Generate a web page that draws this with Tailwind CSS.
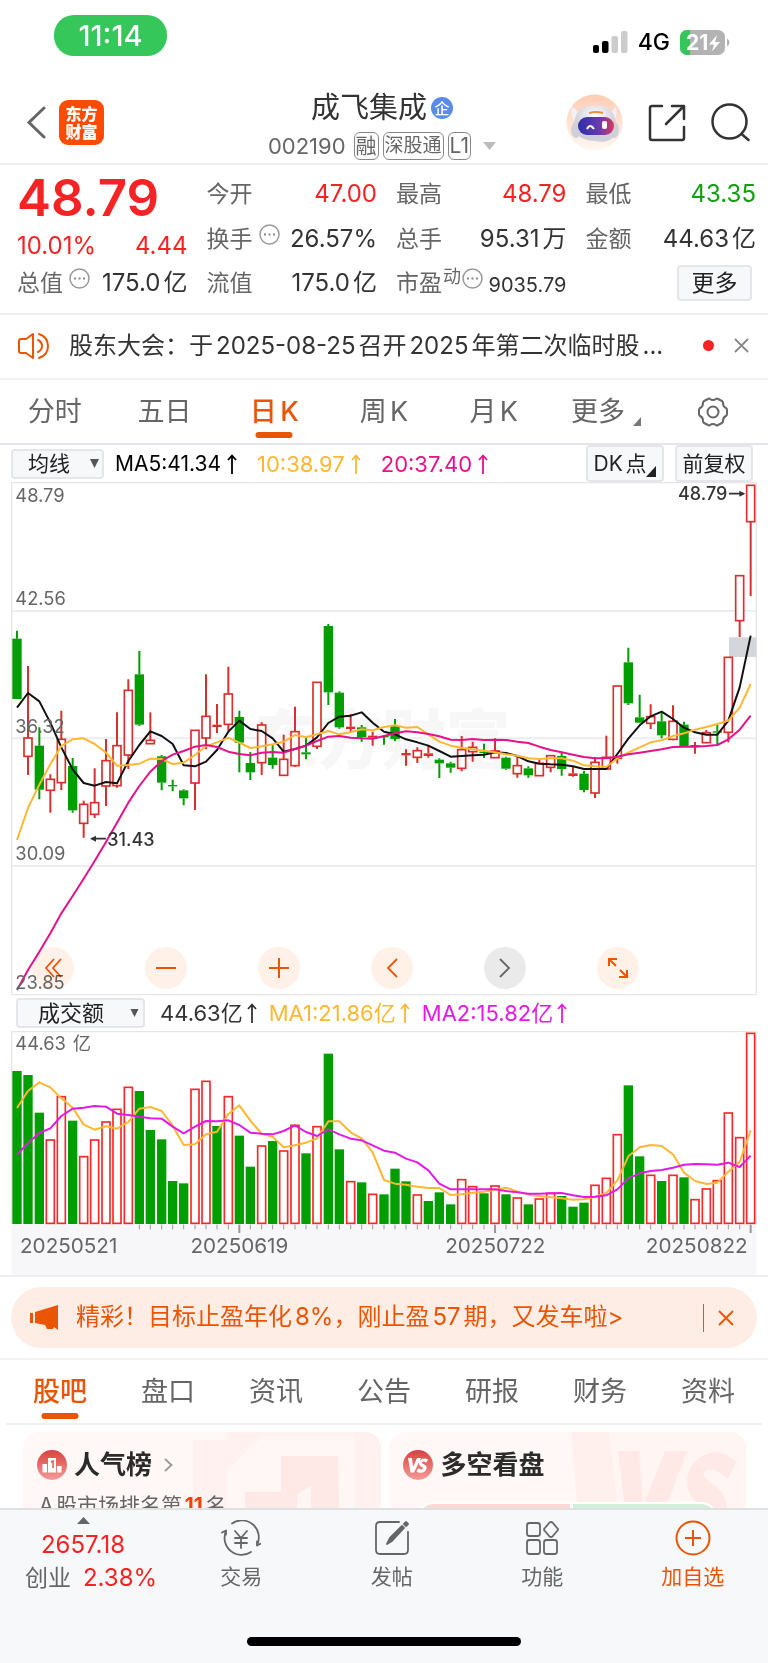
<!DOCTYPE html>
<html lang="zh-CN">
<head>
<meta charset="utf-8">
<meta name="viewport" content="width=device-width, initial-scale=1">
<title>成飞集成 002190</title>
<script src="https://cdn.jsdelivr.net/npm/@tailwindcss/browser@4"></script>
</head>
<body class="bg-white font-['Inter','Noto_Sans_CJK_SC',sans-serif] text-[#333] text-2xl leading-none [text-autospace:normal]">

<!-- Status bar -->
<div class="flex items-start justify-between pt-[15px] pl-[54px] pr-[38px] h-[84px]">
  <div class="flex items-center justify-center w-[113px] h-[41px] rounded-[20px] bg-[#35c759] text-white text-[29px] font-medium">11:14</div>
  <div class="flex items-center gap-[10px] pt-[13px] h-[41px]">
    <svg class="w-[35px] h-[23px]" viewBox="0 0 35 23" aria-hidden="true"><rect x="0" y="14" width="6" height="8" rx="2"/><rect x="9" y="10" width="6.500" height="12" rx="2"/><rect x="18.500" y="5" width="6.500" height="17" rx="2" fill="#ccc"/><rect x="28" y="0" width="6.500" height="22" rx="2" fill="#ccc"/></svg>
    <span class="text-black text-[23px] font-medium">4G</span>
    <svg class="w-[50px] h-[25px]" viewBox="0 0 50 25" role="img" aria-label="电量">
      <defs><clipPath id="bat"><rect width="45" height="25" rx="7"/></clipPath></defs>
      <g clip-path="url(#bat)"><rect width="45" height="25" fill="#b3b3b3"/><rect width="10" height="25" fill="#35c759"/></g>
      <path d="M47 8.500q2.500 1.500 2.500 4t-2.500 4z" fill="#b3b3b3"/>
      <text x="6" y="20" font-size="21" font-weight="700" fill="#fff">21</text>
      <path d="M37 5l-8 9.500h5l-2 7 8-9.500h-5z" fill="#fff"/>
    </svg>
  </div>
</div>

<!-- Header -->
<header class="grid grid-cols-[1fr_auto_1fr] items-center h-[81px] pl-[14px] pr-[18px] border-b-2 border-[#efefef]">
  <div class="flex items-center gap-[13px] pb-[2px] pl-[12px]">
    <a href="#" aria-label="返回"><svg class="w-[20px] h-[33px]" viewBox="0 0 20 33" fill="none" stroke="#666" stroke-width="3" stroke-linecap="round"><path d="M18 2L3 16.500 18 31"/></svg></a>
    <a href="#" class="grid place-content-center w-[45px] h-[45px] rounded-[9px] bg-[#fe4b03] text-white text-base leading-[18px] font-black">东方<br>财富</a>
  </div>
  <div class="flex flex-col items-center gap-[7px] pt-1">
    <div class="flex items-center gap-1">
      <h1 class="text-[29px] leading-[34px]">成飞集成</h1>
      <span class="grid place-content-center size-[22px] rounded-full bg-[#5b8bea] text-white text-[15px] font-medium">企</span>
    </div>
    <div class="flex items-center gap-1 text-[22px] text-[#666]">
      <span class="mr-1">002190</span>
      <span class="px-px h-[28px] leading-[25px] border border-[#888] rounded-md text-[21px]">融</span>
      <span class="px-px h-[28px] leading-[25px] border border-[#888] rounded-md text-[19px]">深股通</span>
      <span class="px-px h-[28px] leading-[26px] border border-[#888] rounded-md text-[21px]">L1</span>
      <svg class="w-[13px] h-[8px] ml-2" viewBox="0 0 13 8" aria-hidden="true"><path d="M0 0h13L6.500 8z" fill="#bbb"/></svg>
    </div>
  </div>
  <div class="flex items-center justify-end gap-[25px] pb-[2px]">
    <button aria-label="智能助手"><svg class="size-[57px]" viewBox="0 0 57 57">
      <defs><linearGradient id="peach" x2="0" y2="1"><stop stop-color="#ffccb3"/><stop offset="1" stop-color="#fff8f4"/></linearGradient><linearGradient id="visor" x2="1" y2="0"><stop stop-color="#2c2fa8"/><stop offset=".6" stop-color="#6a3bb0"/><stop offset="1" stop-color="#e0365a"/></linearGradient><radialGradient id="shell" cy=".3"><stop stop-color="#fff"/><stop offset="1" stop-color="#cfcfd8"/></radialGradient></defs>
      <circle cx="28.500" cy="28.500" r="28" fill="url(#peach)"/>
      <path d="M6 12q3 3 6 6l4-3 3 6-8 9q-8-8-5-18zM50 12q-2 4-6 6l-4-3-3 6 8 9q8-8 5-18z" fill="#f1f0f3"/>
      <ellipse cx="10" cy="36" rx="5" ry="8" fill="#d0d0d8"/><ellipse cx="48" cy="36" rx="5" ry="8" fill="#d0d0d8"/>
      <path d="M8 31q1-20 21-20t21 20-21 16Q9 46 8 31z" fill="url(#shell)"/>
      <path d="M23 18q7-2 14 0v2q-7-2-14 0z" fill="#e8923f"/>
      <rect x="12" y="23" width="36" height="18" rx="9" fill="url(#visor)"/>
      <path d="M21 35q3-6 7 0" fill="none" stroke="#fff" stroke-width="2"/><rect x="36" y="27" width="5" height="8" rx="2" fill="#fff"/>
    </svg></button>
    <button aria-label="分享"><svg class="w-[38px] h-[38px]" viewBox="0 0 38 38" fill="none" stroke="#333" stroke-width="2.500" stroke-linecap="round" stroke-linejoin="round"><path d="M14 2H4Q2 2 2 4v30q0 2 2 2h30q2 0 2-2V23M24 2h12v13M36 2L18 20"/></svg></button>
    <button aria-label="搜索"><svg class="w-[39px] h-[39px]" viewBox="0 0 39 39" fill="none" stroke="#333" stroke-width="2.500" stroke-linecap="round"><circle cx="18.500" cy="18.500" r="17"/><path d="M30.500 31l7 6"/></svg></button>
  </div>
</header>

<!-- Quote -->
<section class="grid grid-cols-4 grid-rows-[44px_46px_42px] gap-x-[19px] items-center pt-[7px] pb-[9px] pl-[17px] pr-[12px] text-[#333] border-b-2 border-[#efeff3] text-2xl leading-none whitespace-nowrap">
  <div class="row-span-2 self-start text-[#f52323]">
    <div class="text-[51px] leading-[52px] font-semibold">48.79</div>
    <div class="flex justify-between pt-[10px]"><span>10.01%</span><span>4.44</span></div>
  </div>
  <div class="flex items-center justify-between"><span class="text-[23px] text-[#666]">今开</span><span class="text-[#f52323]">47.00</span></div>
  <div class="flex items-center justify-between"><span class="text-[23px] text-[#666]">最高</span><span class="text-[#f52323]">48.79</span></div>
  <div class="flex items-center justify-between"><span class="text-[23px] text-[#666]">最低</span><span class="text-[#10a010]">43.35</span></div>
  <div class="flex items-center justify-between"><span class="flex items-start gap-[6px] text-[23px] leading-[31px] text-[#666]">换手<button aria-label="换手说明"><svg class="size-[21px]" viewBox="0 0 21 21"><circle cx="10.500" cy="10.500" r="9.500" fill="none" stroke="#999" stroke-width="1.500"/><path d="M5 9.500h2v2H5zM9.500 9.500h2v2h-2zM14 9.500h2v2h-2z" fill="#888"/></svg></button></span><span>26.57%</span></div>
  <div class="flex items-center justify-between"><span class="text-[23px] text-[#666]">总手</span><span>95.31万</span></div>
  <div class="flex items-center justify-between"><span class="text-[23px] text-[#666]">金额</span><span>44.63亿</span></div>
  <div class="flex items-center justify-between"><span class="flex items-start gap-[6px] text-[23px] leading-[31px] text-[#666]">总值<button aria-label="总值说明"><svg class="size-[21px]" viewBox="0 0 21 21"><circle cx="10.500" cy="10.500" r="9.500" fill="none" stroke="#999" stroke-width="1.500"/><path d="M5 9.500h2v2H5zM9.500 9.500h2v2h-2zM14 9.500h2v2h-2z" fill="#888"/></svg></button></span><span>175.0亿</span></div>
  <div class="flex items-center justify-between"><span class="text-[23px] text-[#666]">流值</span><span>175.0亿</span></div>
  <div class="flex items-center justify-between"><span class="flex items-start text-[23px] leading-[31px] text-[#666]">市盈<span class="text-[18px] leading-[18px] px-px">动</span><button aria-label="市盈说明"><svg class="size-[21px]" viewBox="0 0 21 21"><circle cx="10.500" cy="10.500" r="9.500" fill="none" stroke="#999" stroke-width="1.500"/><path d="M5 9.500h2v2H5zM9.500 9.500h2v2h-2zM14 9.500h2v2h-2z" fill="#888"/></svg></button></span><span class="text-[20px] pt-1">9035.79</span></div>
  <button class="justify-self-end mr-[4px] w-[75px] h-[36px] rounded border-2 border-[#e5e6eb] bg-[#f7f8fa] text-[23px] text-[#222]">更多</button>
</section>

<!-- Notice -->
<section class="flex items-center h-[65px] pb-[2px] pl-[18px] pr-[19px] border-b-2 border-[#f1f1f3]">
  <svg class="w-[32px] h-[28px] shrink-0" viewBox="0 0 32 28" fill="none" stroke="#ea5504" stroke-width="2" stroke-linejoin="round" stroke-linecap="round"><path d="M15 2v24l-7-5H3q-2 0-2-2V9q0-2 2-2h5zM20 8q4 2 4 6t-4 6M21 2q9 3 9 12t-9 12"/></svg>
  <a href="#" class="ml-[19px] leading-8 whitespace-nowrap">股东大会：于2025-08-25召开2025年第二次临时股...</a>
  <span class="ml-auto size-[11px] rounded-full bg-[#f52323] shrink-0"></span>
  <button aria-label="关闭" class="ml-[20px] shrink-0"><svg class="w-[15px] h-[15px]" viewBox="0 0 15 15" stroke="#888" stroke-width="1.800"><path d="M1 1l13 13M14 1L1 14"/></svg></button>
</section>

<!-- Period tabs -->
<nav class="grid grid-cols-7 h-[65px] border-b-2 border-[#e4e4ea] text-[27px] text-[#666]">
  <a href="#" class="grid place-content-center">分时</a>
  <a href="#" class="grid place-content-center">五日</a>
  <a href="#" class="relative grid place-content-center text-[#ea5504] font-medium">日K<span class="absolute bottom-[5px] left-1/2 -translate-x-1/2 w-[37px] h-[6px] rounded-full bg-[#ea5504]"></span></a>
  <a href="#" class="grid place-content-center">周K</a>
  <a href="#" class="grid place-content-center">月K</a>
  <a href="#" class="flex items-center justify-center gap-2 pl-[5px]">更多<svg class="w-[8px] h-[9px] mt-5" viewBox="0 0 8 9" aria-hidden="true"><path d="M8 0v9H0z" fill="#777"/></svg></a>
  <button aria-label="设置" class="grid place-content-center"><svg class="w-[32px] h-[30px]" viewBox="0 0 32 30" fill="none" stroke="#666" stroke-width="2" stroke-linejoin="round"><path d="M11 2q1-1 2 0 3 2 6 0 1-1 2 0l4 2q1 1 1 2 0 4 3 5 1 1 1 2v4q0 1-1 2-3 1-3 5 0 1-1 2l-4 2q-1 1-2 0-3-2-6 0-1 1-2 0l-4-2q-1-1-1-2 0-4-3-5-1-1-1-2v-4q0-1 1-2 3-1 3-5 0-1 1-2z"/><circle cx="16" cy="15" r="5.500"/></svg></button>
</nav>

<!-- Main chart -->
<section>
  <div class="flex items-center h-[37px] pl-[11px] pr-[15px] text-[22px] whitespace-nowrap">
    <div class="relative">
      <select aria-label="主图指标" class="appearance-none w-[93px] h-[30px] pl-[15px] rounded border-2 border-[#e5e6eb] bg-[#f7f8fa] text-[21px] leading-none text-[#222]"><option>均线</option></select>
      <svg class="absolute right-[5px] top-[10px] w-[9px] h-[9px] pointer-events-none" viewBox="0 0 9 9"><path d="M0 0h9L4.500 9z" fill="#555"/></svg>
    </div>
    <span class="ml-[11px] flex items-center gap-[6px] text-[21px] text-black">MA5:41.34<svg class="w-[10px] h-[20px]" viewBox="0 0 10 20" fill="none" stroke="currentColor" stroke-width="1.800" role="img" aria-label="上升"><path d="M5 20V1.500M1 6l4-4.500L9 6"/></svg></span>
    <span class="ml-[20px] flex items-center gap-[6px] text-[#fdb833]">10:38.97<svg class="w-[10px] h-[20px]" viewBox="0 0 10 20" fill="none" stroke="currentColor" stroke-width="1.800" role="img" aria-label="上升"><path d="M5 20V1.500M1 6l4-4.500L9 6"/></svg></span>
    <span class="ml-[20px] flex items-center gap-[6px] text-[#e4128b]">20:37.40<svg class="w-[10px] h-[20px]" viewBox="0 0 10 20" fill="none" stroke="currentColor" stroke-width="1.800" role="img" aria-label="上升"><path d="M5 20V1.500M1 6l4-4.500L9 6"/></svg></span>
    <button class="ml-auto flex items-center justify-center w-[78px] h-[37px] rounded border-2 border-[#e5e6eb] bg-[#f7f8fa] text-[21px] text-[#222]">DK点<svg class="w-[10px] h-[11px] mt-4" viewBox="0 0 10 11"><path d="M10 0v11H0z" fill="#222"/></svg></button>
    <button class="ml-[11px] w-[78px] h-[37px] rounded border-2 border-[#e5e6eb] bg-[#f7f8fa] text-[#222] text-[21px]">前复权</button>
  </div>
  <div class="relative">
    <svg id="kline" class="block w-full" viewBox="0 6 2304 1542" role="img" aria-label="日K线图"></svg>
    <div class="absolute left-[4.200%] right-[16.800%] bottom-[7px] flex justify-between mix-blend-multiply">
      <button aria-label="最早" class="grid place-content-center size-[42px] rounded-full bg-[#fff0e8]"><svg class="w-[18px] h-[20px]" viewBox="0 0 18 20" fill="none" stroke="#ea5504" stroke-width="1.800"><path d="M10 1L2 10l8 9M17 1l-8 9 8 9"/></svg></button>
      <button aria-label="缩小" class="grid place-content-center size-[42px] rounded-full bg-[#fff0e8]"><svg class="size-[20px]" viewBox="0 0 20 20" stroke="#ea5504" stroke-width="2"><path d="M0 10h20"/></svg></button>
      <button aria-label="放大" class="grid place-content-center size-[42px] rounded-full bg-[#fff0e8]"><svg class="size-[20px]" viewBox="0 0 20 20" stroke="#ea5504" stroke-width="2"><path d="M0 10h20M10 0v20"/></svg></button>
      <button aria-label="向左" class="grid place-content-center size-[42px] rounded-full bg-[#fff0e8]"><svg class="w-[12px] h-[20px]" viewBox="0 0 12 20" fill="none" stroke="#ea5504" stroke-width="1.800"><path d="M11 1l-9 9 9 9"/></svg></button>
      <button aria-label="向右" class="grid place-content-center size-[42px] rounded-full bg-[#eaeaea]"><svg class="w-[12px] h-[20px]" viewBox="0 0 12 20" fill="none" stroke="#666" stroke-width="1.800"><path d="M1 1l9 9-9 9"/></svg></button>
      <button aria-label="全屏" class="grid place-content-center size-[42px] rounded-full bg-[#fff0e8]"><svg class="size-[22px]" viewBox="0 0 22 22" fill="none" stroke="#ea5504" stroke-width="2"><path d="M2 9V2h8M2 2l7 7M20 13v7h-8M20 20l-7-7"/></svg></button>
    </div>
  </div>
</section>

<!-- Turnover chart -->
<section class="border-b-2 border-[#eeeef2]">
  <div class="flex items-center h-[35px] pb-[2px] pl-[16px] text-[22px] whitespace-nowrap [text-autospace:no-autospace]">
    <div class="relative">
      <select aria-label="副图指标" class="appearance-none w-[129px] h-[30px] pl-[20px] rounded border-2 border-[#e5e6eb] bg-[#f7f8fa] text-[22px] leading-none text-[#222]"><option>成交额</option></select>
      <svg class="absolute right-[6px] top-[11px] w-[9px] h-[8px] pointer-events-none" viewBox="0 0 9 9"><path d="M0 0h9L4.500 9z" fill="#555"/></svg>
    </div>
    <span class="ml-[15px] flex items-center gap-[4px]">44.63亿<svg class="w-[10px] h-[20px]" viewBox="0 0 10 20" fill="none" stroke="currentColor" stroke-width="1.800" role="img" aria-label="上升"><path d="M5 20V1.500M1 6l4-4.500L9 6"/></svg></span>
    <span class="ml-[12px] flex items-center gap-[4px] text-[#fdb833]">MA1:21.86亿<svg class="w-[10px] h-[20px]" viewBox="0 0 10 20" fill="none" stroke="currentColor" stroke-width="1.800" role="img" aria-label="上升"><path d="M5 20V1.500M1 6l4-4.500L9 6"/></svg></span>
    <span class="ml-[12px] flex items-center gap-[4px] text-[#e11be4]">MA2:15.82亿<svg class="w-[10px] h-[20px]" viewBox="0 0 10 20" fill="none" stroke="currentColor" stroke-width="1.800" role="img" aria-label="上升"><path d="M5 20V1.500M1 6l4-4.500L9 6"/></svg></span>
  </div>
  <svg id="turnover" class="block w-full" viewBox="0 123 2304 732" role="img" aria-label="成交额图"></svg>
</section>

<!-- Promotion banner -->
<div class="px-[11px] py-[10px] border-b-2 border-[#f1f1f3]">
  <div class="flex items-center h-[61px] pl-[18px] pr-[23px] rounded-full bg-[#fdede5] text-[#ea5504]">
    <svg class="w-[29px] h-[25px]" viewBox="0 0 29 25" fill="#ea5504" aria-hidden="true"><path d="M1 8h3v10H1zM6 7L29 0v25l-4-3-1 2h-6l-2-4-10-2z"/></svg>
    <a href="#" class="ml-[18px] leading-8 pb-[2px] whitespace-nowrap">精彩！目标止盈年化8%，刚止盈57期，又发车啦&gt;</a>
    <span class="ml-auto w-px h-[28px] bg-[#ea5504]"></span>
    <button aria-label="关闭" class="ml-[14px]"><svg class="size-[16px]" viewBox="0 0 16 16" stroke="#ea5504" stroke-width="1.800"><path d="M1 1l14 14M15 1L1 15"/></svg></button>
  </div>
</div>

<!-- Content tabs -->
<nav class="grid grid-cols-7 h-[65px] mx-[6px] border-b-2 border-[#f1f1f3] text-[27px] text-[#666]">
  <a href="#" class="relative grid place-content-center text-[#ea5504] font-medium">股吧<span class="absolute bottom-[4px] left-1/2 -translate-x-1/2 w-[37px] h-[6px] rounded-full bg-[#ea5504]"></span></a>
  <a href="#" class="grid place-content-center">盘口</a>
  <a href="#" class="grid place-content-center">资讯</a>
  <a href="#" class="grid place-content-center">公告</a>
  <a href="#" class="grid place-content-center">研报</a>
  <a href="#" class="grid place-content-center">财务</a>
  <a href="#" class="grid place-content-center">资料</a>
</nav>

<!-- Cards, cut off by the bottom bar -->
<section class="grid grid-cols-2 gap-[8px] h-[83px] overflow-hidden pt-[7px] pl-[23px] pr-[22px]">
  <div class="relative h-[120px] overflow-hidden rounded-2xl bg-[#fff8f6] pt-[18px] pl-[14px]">
    <svg class="absolute right-0 top-0 w-[188px] h-[120px]" viewBox="0 0 188 120" aria-hidden="true"><path d="M0 8h34v-8h154v120H0z" fill="#fff1ef"/><path d="M34 60V38l36-34h92v116H34z" fill="#fff7f5"/><path d="M52 60h36v-36h57l2 96H52z" fill="#fee9e7"/><path d="M104 62l14-8v66h-14z" fill="#fff6f4"/></svg>
    <div class="relative flex items-center h-[30px]">
      <svg class="size-[30px]" viewBox="0 0 30 30" aria-hidden="true"><defs><linearGradient id="red" x2="0" y2="1"><stop stop-color="#d9423f"/><stop offset="1" stop-color="#f29c98"/></linearGradient></defs><circle cx="15" cy="15" r="15" fill="url(#red)"/><path d="M5.500 14H10v8.500H5.500zM11 8h8v14.500h-8zM20 16h4.500v6.500H20z" fill="#fff"/><path d="M14 12l2-1v7" fill="none" stroke="#dd5b57" stroke-width="1.500"/></svg>
      <h2 class="ml-[7px] text-[26px] font-bold text-[#2b2b2b]">人气榜</h2>
      <svg class="ml-[12px] w-[9px] h-[14px]" viewBox="0 0 9 14" fill="none" stroke="#999" stroke-width="1.800"><path d="M1 1l6.500 6L1 13"/></svg>
    </div>
    <p class="relative mt-[14px] ml-[2px] text-[21px] leading-[24px] text-[#666]">A股市场排名第<b class="text-[#f0420a]">11</b>名</p>
  </div>
  <div class="relative h-[120px] overflow-hidden rounded-2xl bg-[#fff8f6] pt-[18px] pl-[14px]">
    <svg class="absolute right-0 top-0 w-[175px] h-[120px]" viewBox="0 0 175 120" aria-hidden="true"><path d="M0 0h38l14 120H10z" fill="#fff0ee"/><path d="M38 0h137v120H52z" fill="#fff5f3"/><path transform="scale(1 1.350) translate(0 -2)" d="M47 16h21l4 40 22-40h22L82 84H58zM165 24q-18-13-38-2c-18 11-12 28 2 34 12 6 8 13-6 11l-14-4-8 15c16 10 48 9 54-10 5-18-6-24-18-30-9-5-2-12 11-6l9 5z" fill="#fee9e7"/></svg>
    <div class="relative flex items-center h-[30px]">
      <svg class="size-[30px]" viewBox="0 0 30 30" aria-hidden="true"><circle cx="15" cy="15" r="15" fill="url(#red)"/><path d="M5 8h4l1 9 4-9h4l-7 14.500H7.500zM25 9.500l-1.500 3q-4-2-4.500 0c0 2 5.500 2 4.500 6-1 5-7 5-10 3l1.500-3q4.500 2 5 0c0-2-5-2-4-6 1-4 5.500-5 9-3z" fill="#fff"/></svg>
      <h2 class="ml-[8px] text-[26px] font-bold text-[#2b2b2b]">多空看盘</h2>
    </div>
    <div class="absolute left-[28px] right-[28px] top-[70px] grid grid-cols-[153fr_144fr] gap-[3px] rounded-full border-2 border-white bg-white overflow-hidden"><span class="h-[30px] bg-[#fbd8d5]"></span><span class="h-[30px] bg-[#d3eedb]"></span></div>
  </div>
</section>

<!-- Bottom bar -->
<footer class="bg-[#f7f8fa] border-t-2 border-[#dfe0e4] h-[155px] text-[22px] text-[#666]">
  <nav class="grid grid-cols-[166px_repeat(4,1fr)]">
    <a href="#" class="flex flex-col items-center pt-[7px]">
      <svg class="w-[13px] h-[7px]" viewBox="0 0 13 7" aria-hidden="true"><path d="M6.500 0L13 7H0z" fill="#666"/></svg>
      <span class="mt-[9px] text-2xl leading-[24px] text-[#f52323]">2657.18</span>
      <span class="mt-[8px] flex gap-3 text-[23px] leading-[26px] pl-4">创业<span class="text-2xl leading-[26px] text-[#f52323]">2.38%</span></span>
    </a>
    <a href="#" class="flex flex-col items-center pt-[10px] gap-[8px]">
      <svg class="w-[40px] h-[36px]" viewBox="0 0 40 36" fill="none" stroke="#666" stroke-width="1.800" stroke-linecap="round" stroke-linejoin="round"><path d="M11 3.500A17 17 0 0 1 36 25M36 25.500l4-2M36 25.500v-4M30 32A17 17 0 0 1 5 11M1 12.500l4-2v4M14 11l6 7 6-7M14 18h12M14 23h12M20 18v10"/></svg>
      <span class="leading-[26px] text-[21px]">交易</span>
    </a>
    <a href="#" class="flex flex-col items-center pt-[10px] gap-[8px]">
      <svg class="w-[34px] h-[36px]" viewBox="0 0 34 36" fill="none" stroke="#666" stroke-width="1.800" stroke-linecap="round" stroke-linejoin="round"><path d="M24 2H5Q1 2 1 6v24q0 4 4 4h24q4 0 4-4V12"/><path d="M12 24l3-6L27 6l2 2-12 13zM29 4l2-2 2 2-2 2z" fill="#666"/></svg>
      <span class="leading-[26px] text-[21px]">发帖</span>
    </a>
    <a href="#" class="flex flex-col items-center pt-[10px] gap-[8px]">
      <svg class="w-[34px] h-[36px]" viewBox="0 0 34 36" fill="none" stroke="#666" stroke-width="1.800" stroke-linejoin="round"><rect x="2" y="3" width="13" height="13" rx="2.500"/><rect x="2" y="20" width="13" height="14" rx="2.500"/><rect x="19" y="20" width="13" height="14" rx="2.500"/><path d="M24.500 2.500q1.500-1 3 0l5 6q1 1 0 2l-5 6q-1.500 1-3 0l-5-6q-1-1 0-2z"/></svg>
      <span class="leading-[26px] text-[21px]">功能</span>
    </a>
    <button class="flex flex-col items-center pt-[10px] gap-[8px] text-[#ea5504]">
      <svg class="size-[36px]" viewBox="0 0 36 36" fill="none" stroke="#ea5504" stroke-width="2"><circle cx="18" cy="18" r="16.500"/><path d="M10 18h16M18 10v16"/></svg>
      <span class="leading-[26px] text-[21px]">加自选</span>
    </button>
  </nav>
  <div class="mx-auto mt-[46px] w-[274px] h-[9px] rounded-full bg-black"></div>
</footer>

<script>
const UP = '#d92f2f', DOWN = '#009e00', STEP = 33.35, X0 = 51;
const x = i => Math.round(X0 + i * STEP);
// Each candle: direction, high, body top, body bottom, low
const candles = `G452,476,657,657 R558,774,829,885 G742,797,929,958 R883,898,931,998 R692,778,908,930 G834,858,991,998 R962,973,1030,1073 R865,968,1003,1014 R777,842,918,978 R697,797,917,923 R598,631,825,867 G513,583,734,738 R697,781,791,791 G825,829,908,931 G899,915,919,934 G928,931,955,976 R751,751,909,990 R583,709,774,807 R672,734,741,759 R560,642,733,752 G692,711,788,877 G816,849,877,900 R727,735,848,885 G796,833,855,866 R764,838,886,886 R680,755,857,860 G774,817,823,838 R607,607,799,807 G432,438,637,675 G634,638,742,746 R702,740,747,757 G735,742,771,785 R755,767,773,797 G765,768,771,794 G717,738,777,783 R808,819,826,857 R802,812,832,849 R796,820,828,833 G835,839,850,894 G845,850,863,878 R768,809,865,874 R785,802,815,845 G791,815,819,834 R775,813,833,834 G830,833,866,869 R826,857,881,893 G859,865,886,893 R838,850,887,888 R825,827,862,877 G817,828,867,887 R858,880,888,890 G873,881,930,937 R832,847,939,954 R767,832,867,867 R618,618,835,851 G503,547,670,675 G644,712,728,730 R673,710,730,747 G698,724,766,775 R676,724,778,781 G725,734,800,800 R786,795,801,821 R750,758,788,790 G735,754,758,795 R532,532,757,787 R287,287,422,471 R16,16,125,348`.split(' ').map(s => [s[0], ...s.slice(1).split(',').map(Number)]);
const ma5 = [683,639,664,728,802,868,909,917,906,910,843,795,754,768,792,856,859,845,810,755,722,747,753,775,815,807,797,772,729,710,707,697,728,755,763,778,787,797,813,830,828,826,824,817,819,828,844,851,853,854,859,867,867,867,822,776,736,709,695,717,743,757,764,764,722,622,467];
const ma10 = [1080,984,914,853,798,778,775,792,818,857,855,851,836,837,852,848,825,799,787,773,788,804,799,793,785,765,772,763,753,763,757,748,751,741,736,743,741,763,785,797,803,808,812,817,823,827,835,837,835,835,842,856,859,861,835,818,802,787,781,768,760,749,741,732,722,683,612];
const ma20 = [1530,1470,1415,1360,1300,1248,1196,1143,1086,1028,968,918,875,843,824,813,800,795,801,815,822,826,818,816,818,807,797,783,770,768,773,775,776,768,760,754,757,762,769,779,780,777,780,779,780,785,789,800,810,817,824,831,835,835,830,823,818,813,808,801,800,800,798,795,778,749,707];
const bars = [243,255,368,448,318,392,498,448,394,356,290,303,420,448,573,580,296,272,408,318,437,530,466,453,481,404,490,408,191,478,573,577,611,613,536,574,613,633,607,643,567,588,610,586,613,622,643,625,608,618,650,638,584,563,432,286,499,554,573,554,562,627,595,570,367,441,128];
// Days whose turnover colour differs from the candle colour
const flipped = new Set([1, 12, 18, 35, 37, 50, 63]);
const v1 = [354,303,277,292,325,353,404,419,409,416,396,356,351,363,407,465,463,433,425,372,346,392,431,440,472,466,458,445,394,394,427,445,487,570,581,584,590,594,594,615,613,608,605,599,593,604,614,618,622,625,629,628,621,609,571,499,472,465,468,493,548,573,582,578,545,516,420];
const v2 = [494,459,429,415,378,356,353,348,350,371,375,380,385,386,410,430,410,393,394,391,405,428,431,433,423,406,426,438,418,433,446,451,466,482,488,506,517,541,581,598,598,598,598,598,603,607,611,611,610,609,616,621,620,616,598,565,550,543,540,533,524,522,523,524,518,531,497];
const line = (a, c) => `<polyline fill="none" stroke="${c}" stroke-width="6" stroke-linejoin="round" points="${a.map((y, i) => x(i) + ',' + y).join(' ')}"/>`;
const label = (t, X, Y, s = 54, c = '#666', extra = '') => `<text x="${X}" y="${Y}" font-size="${s}" fill="${c}" ${extra}>${t}</text>`;

let k = '<path d="M35 8H2269V1544H35z" fill="#fff" stroke="#e6e6ea" stroke-width="4"/><path d="M35 393H2269M35 775H2269M35 1158H2269" stroke="#ebedf3" stroke-width="6"/>';
k += label('东方财富', 762, 850, 192, '#f7f7f7', 'font-weight="900"');
k += '<rect x="2187" y="472" width="82" height="59" fill="#d3d6db"/>';
candles.forEach(([d, h, t, b, l], i) => {
  const X = x(i), c = d === 'R' ? UP : DOWN, H = Math.max(b - t, 4);
  k += `<path d="M${X} ${h}V${t}M${X} ${b}V${l}" stroke="${c}" stroke-width="6"/>`;
  k += d === 'R' && H > 9
    ? `<rect x="${X - 12}" y="${t}" width="24" height="${H}" fill="#fff" stroke="${c}" stroke-width="5"/>`
    : `<rect x="${X - 14}" y="${t}" width="28" height="${H}" fill="${c}"/>`;
});
k += line(ma5, '#111') + line(ma10, '#fdb833') + line(ma20, '#e4128b');
[['48.79', 67], ['42.56', 375], ['36.32', 759], ['30.09', 1141], ['23.85', 1526]].forEach(([t, y]) => k += label(t, 46, y, 55));
k += label('31.43', 322, 1098, 54, '#333', 'font-weight="500"') + label('48.79', 2034, 61, 54, '#333', 'font-weight="500"');
k += '<path d="M275 1076H318M2187 41H2230" stroke="#333" stroke-width="5"/><path d="M270 1076l18-9v18zM2236 41l-18-9v18z" fill="#333"/>';
document.getElementById('kline').innerHTML = k;

let v = '<path d="M35 702H2269V855H35z" fill="#f7f7fa"/><path d="M35 702V125H2269V702" fill="none" stroke="#e6e6ea" stroke-width="4"/>';
v += label('44.63亿', 46, 181, 55);
bars.forEach((t, i) => {
  const X = x(i), red = (candles[i][0] === 'R') !== flipped.has(i);
  v += red
    ? `<rect x="${X - 12}" y="${t + 2}" width="24" height="${698 - t}" fill="#fff" stroke="#fa2828" stroke-width="5"/>`
    : `<rect x="${X - 14}" y="${t}" width="28" height="${702 - t}" fill="${DOWN}"/>`;
  if (i > 10) v += `<path d="M${X} 704v${[20, 43, 66].includes(i) ? 25 : 14}" stroke="#999" stroke-width="${[20, 43, 66].includes(i) ? 6 : 3}"/>`;
});
v += line(v1, '#fdb833') + line(v2, '#e11be4');
v += label('20250521', 60, 790, 62) + label('20250619', 718, 790, 62, '#666', 'text-anchor="middle"') + label('20250722', 1486, 790, 62, '#666', 'text-anchor="middle"') + label('20250822', 2243, 790, 62, '#666', 'text-anchor="end"');
document.getElementById('turnover').innerHTML = v;
</script>
</body>
</html>
